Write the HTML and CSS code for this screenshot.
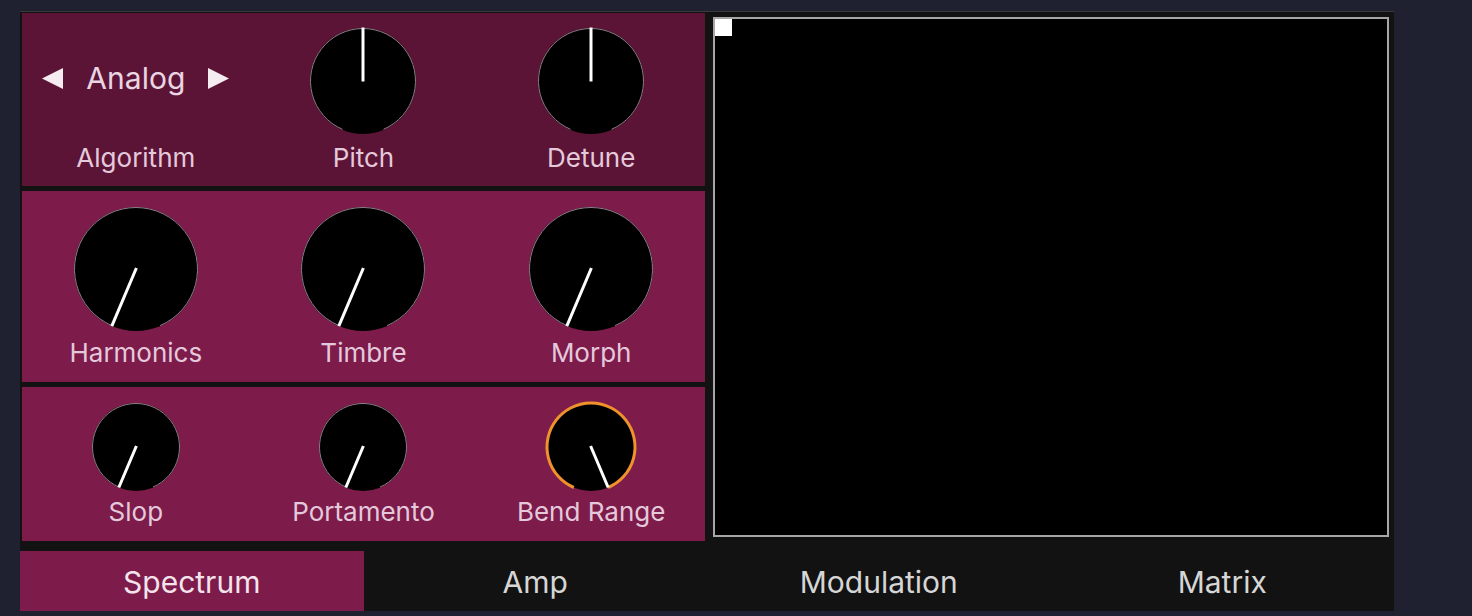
FILE: index.html
```html
<!DOCTYPE html>
<html lang="en">
<head>
<meta charset="utf-8">
<title>Oscillator</title>
<link rel="stylesheet" href="styles.css">
</head>
<body>
<div class="app">
  <div class="main">
    <div class="panels">
      <section class="panel panel-top">
        <div class="ctrl">
          <div class="selector">
            <svg class="arrow" width="21" height="21" viewBox="0 0 21 21"><polygon points="0,10.5 21,0 21,21"/></svg>
            <span class="sel-value">Analog</span>
            <svg class="arrow" width="21" height="21" viewBox="0 0 21 21"><polygon points="21,10.5 0,0 0,21"/></svg>
          </div>
          <div class="label">Algorithm</div>
        </div>
        <div class="ctrl">
          <svg class="knob" width="110" height="110" viewBox="0 0 110 110">
            <circle cx="55" cy="55" r="53" class="face"/>
            <path class="track" d="M34.49 103.33 A52.5 52.5 0 1 1 75.51 103.33"/>
            <line class="needle" x1="55" y1="55.5" x2="55" y2="1.5"/>
          </svg>
          <div class="label">Pitch</div>
        </div>
        <div class="ctrl">
          <svg class="knob" width="110" height="110" viewBox="0 0 110 110">
            <circle cx="55" cy="55" r="53" class="face"/>
            <path class="track" d="M34.49 103.33 A52.5 52.5 0 1 1 75.51 103.33"/>
            <line class="needle" x1="55" y1="55.5" x2="55" y2="1.5"/>
          </svg>
          <div class="label">Detune</div>
        </div>
      </section>

      <section class="panel panel-mid">
        <div class="ctrl">
          <svg class="knob" width="128" height="128" viewBox="0 0 128 128">
            <circle cx="64" cy="64" r="62" class="face"/>
            <path class="track" d="M39.97 120.61 A61.5 61.5 0 1 1 88.03 120.61"/>
            <line class="needle" x1="64.4" y1="63" x2="39.78" y2="121.07"/>
          </svg>
          <div class="label">Harmonics</div>
        </div>
        <div class="ctrl">
          <svg class="knob" width="128" height="128" viewBox="0 0 128 128">
            <circle cx="64" cy="64" r="62" class="face"/>
            <path class="track" d="M39.97 120.61 A61.5 61.5 0 1 1 88.03 120.61"/>
            <line class="needle" x1="64.4" y1="63" x2="39.78" y2="121.07"/>
          </svg>
          <div class="label">Timbre</div>
        </div>
        <div class="ctrl">
          <svg class="knob" width="128" height="128" viewBox="0 0 128 128">
            <circle cx="64" cy="64" r="62" class="face"/>
            <path class="track" d="M39.97 120.61 A61.5 61.5 0 1 1 88.03 120.61"/>
            <line class="needle" x1="64.4" y1="63" x2="39.78" y2="121.07"/>
          </svg>
          <div class="label">Morph</div>
        </div>
      </section>

      <section class="panel panel-low">
        <div class="ctrl">
          <svg class="knob" width="92" height="92" viewBox="0 0 92 92">
            <circle cx="46" cy="46" r="44" class="face"/>
            <path class="track" d="M29.0 86.04 A43.5 43.5 0 1 1 63.0 86.04"/>
            <line class="needle" x1="46.4" y1="45" x2="28.81" y2="86.5"/>
          </svg>
          <div class="label">Slop</div>
        </div>
        <div class="ctrl">
          <svg class="knob" width="92" height="92" viewBox="0 0 92 92">
            <circle cx="46" cy="46" r="44" class="face"/>
            <path class="track" d="M29.0 86.04 A43.5 43.5 0 1 1 63.0 86.04"/>
            <line class="needle" x1="46.4" y1="45" x2="28.81" y2="86.5"/>
          </svg>
          <div class="label">Portamento</div>
        </div>
        <div class="ctrl">
          <svg class="knob" width="92" height="92" viewBox="0 0 92 92">
            <circle cx="46" cy="46" r="44" class="face"/>
            <path class="value" d="M28.81 86.5 A44 44 0 1 1 63.19 86.5"/>
            <line class="needle" x1="45.6" y1="45" x2="63.19" y2="86.5"/>
          </svg>
          <div class="label">Bend Range</div>
        </div>
      </section>
    </div>

    <div class="scope">
      <div class="scope-marker"></div>
    </div>
  </div>

  <nav class="tabs">
    <div class="tab active">Spectrum</div>
    <div class="tab">Amp</div>
    <div class="tab">Modulation</div>
    <div class="tab">Matrix</div>
  </nav>
</div>
</body>
</html>
```

FILE: styles.css
```css
* { box-sizing: border-box; }

html, body {
  margin: 0;
  padding: 0;
}

body {
  width: 1472px;
  height: 616px;
  overflow: hidden;
  background: #1f2130;
  font-family: "Inter", "Helvetica Neue", "Liberation Sans", sans-serif;
  padding: 11px 0 0 20px;
}

.app {
  width: 1374px;
  height: 600px;
  background: #121212;
  border-top: 1px solid #3a3a3a;
  display: flex;
  flex-direction: column;
}

.main {
  display: flex;
  height: 529px;
  padding: 1px 5px 0 2px;
}

.panels {
  width: 683px;
  display: flex;
  flex-direction: column;
  gap: 5px;
}

.panel {
  display: grid;
  grid-template-columns: repeat(3, 1fr);
}

.panel-top {
  height: 173px;
  background: #5c1436;
  padding-top: 13px;
}

.panel-mid {
  height: 191px;
  background: #7d1b4b;
  padding-top: 14px;
}

.panel-low {
  height: 154px;
  background: #7d1b4b;
  padding-top: 14px;
}

.ctrl {
  display: flex;
  flex-direction: column;
  align-items: center;
}

.panel-top .ctrl { gap: 7px; }
.panel-mid .ctrl { gap: 5px; }
.panel-low .ctrl { gap: 4px; }

.knob {
  display: block;
  overflow: visible;
}

.face { fill: #000; }

.track {
  fill: none;
  stroke: #8e7f88;
  stroke-width: 1;
}

.value {
  fill: none;
  stroke: #f0922c;
  stroke-width: 3;
}

.needle {
  stroke: #ffffff;
  stroke-width: 3;
}

.label {
  font-size: 26px;
  line-height: 30px;
  color: #e4c9db;
  white-space: nowrap;
}

.selector {
  height: 110px;
  padding-bottom: 6px;
  display: flex;
  align-items: center;
  gap: 23px;
}

.arrow { display: block; }
.arrow polygon { fill: #f4ecf1; }

.sel-value {
  font-size: 30px;
  line-height: 36px;
  color: #ead6e2;
}

.scope {
  flex: 1;
  margin: 4px 0 4px 8px;
  background: #000;
  border: 2px solid #a6a6a6;
}

.scope-marker {
  width: 17px;
  height: 17px;
  background: #ffffff;
}

.tabs {
  height: 70px;
  padding-top: 10px;
  display: grid;
  grid-template-columns: repeat(4, 1fr);
}

.tab {
  height: 60px;
  padding-top: 2px;
  display: flex;
  align-items: center;
  justify-content: center;
  font-size: 30px;
  color: #d6d6d6;
}

.tab.active {
  background: #7d1b4b;
  color: #f3e4ec;
}
```
